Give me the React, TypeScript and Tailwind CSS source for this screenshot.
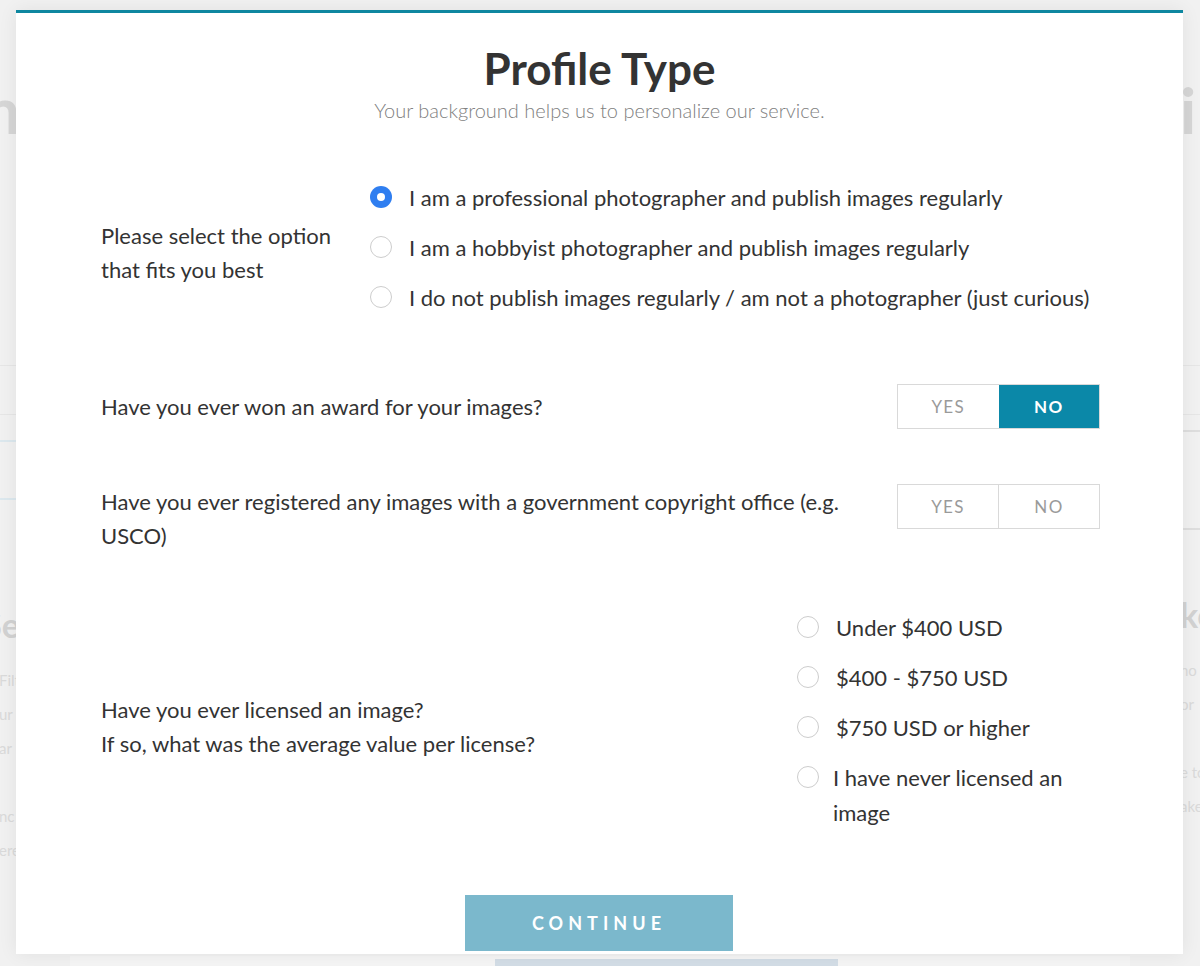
import React from "react";

const font = { fontFamily: "Lato, 'Open Sans', sans-serif" };

function Radio({ checked }: { checked?: boolean }) {
  return checked ? (
    <span className="flex h-[22px] w-[22px] shrink-0 items-center justify-center rounded-full bg-[#2f7ef0]">
      <span className="h-[8px] w-[8px] rounded-full bg-white" />
    </span>
  ) : (
    <span className="h-[22px] w-[22px] shrink-0 rounded-full border-[1.5px] border-[#cdcdcd] bg-white" />
  );
}

function Option({ label, checked }: { label: string; checked?: boolean }) {
  return (
    <div className="flex items-start gap-[17px] py-[7.5px]">
      <div className="flex h-[35px] items-center">
        <Radio checked={checked} />
      </div>
      <span className="text-[22px] leading-[35px] text-[#333]">{label}</span>
    </div>
  );
}

function Toggle({ value }: { value?: "yes" | "no" }) {
  return (
    <div className="flex h-[45px] w-[203px] shrink-0 border border-[#d9d9d9]">
      <div
        className={`flex flex-1 items-center justify-center text-[17px] tracking-[0.08em] ${
          value === "yes" ? "bg-[#0b88a8] font-bold text-white" : "text-[#9a9a9a]"
        }`}
      >
        YES
      </div>
      <div
        className={`flex flex-1 items-center justify-center border-l border-[#d9d9d9] text-[17px] tracking-[0.08em] ${
          value === "no" ? "border-l-0 bg-[#0b88a8] font-bold text-white" : "text-[#9a9a9a]"
        }`}
      >
        NO
      </div>
    </div>
  );
}

function SideColumn({ side }: { side: "left" | "right" }) {
  const left = side === "left";
  return (
    <div
      className={`flex h-full w-[20px] flex-col overflow-hidden ${left ? "items-end" : "items-start"}`}
    >
      <div className="h-[78px]" />
      <div className="text-[64px] font-bold leading-[64px] text-[#d6d6d6]">{left ? "m" : "i"}</div>
      <div className="h-[223px]" />
      <div className="h-px w-full bg-[#e6e6e6]" />
      <div className="h-[48px]" />
      <div className="h-px w-full bg-[#e6e6e6]" />
      <div className={left ? "h-[25px]" : "h-[15px]"} />
      <div
        className={`w-[30px] border-2 ${left ? "h-[60px] border-[#dce8ee]" : "h-[100px] border-[#dedede]"}`}
      />
      <div className={left ? "h-[105px]" : "h-[65px]"} />
      <div className="text-[34px] font-bold leading-[40px] text-[#d2d2d2]">{left ? "Se" : "ke"}</div>
      <div className="h-[18px]" />
      <div className="flex flex-col text-[15px] leading-[34px] text-[#dadada]">
        {(left ? ["Filt", "ur", "ar", "", "nc", "ere"] : ["ho", "or", "", "e to", "ake"]).map((t, i) => (
          <span key={i} className="block h-[34px] whitespace-nowrap">
            {t}
          </span>
        ))}
      </div>
    </div>
  );
}

export default function App() {
  return (
    <div className="relative h-[966px] w-[1200px] overflow-hidden bg-[#f1f1f1]" style={font}>
      {/* page behind overlay */}
      <div className="flex h-full justify-between">
        <SideColumn side="left" />
        <SideColumn side="right" />
      </div>
      <div className="absolute bottom-0 left-[70px] h-[10px] w-[1060px] bg-[#f5f5f5]">
        <div className="ml-[425px] mt-[3px] h-[7px] w-[343px] bg-[#d3dde6]" />
      </div>

      {/* modal */}
      <div className="absolute left-[16px] top-[10px] h-[944px] w-[1167px] border-t-[3px] border-[#0e87a0] bg-white shadow-[0_0_18px_rgba(0,0,0,0.07)]">
        <div className="flex flex-col items-center pt-[31px]">
          <h1 className="text-[44px] font-bold leading-[48px] text-[#333]">Profile Type</h1>
          <p className="mt-[5px] text-[20px] font-light leading-[26px] text-[#808080]">
            Your background helps us to personalize our service.
          </p>
        </div>

        <div className="flex flex-col pl-[85px] pr-[83px] pt-[49px]">
          {/* row 1 */}
          <div className="flex items-center">
            <div className="w-[269px] pt-[12px] text-[22px] leading-[34px] text-[#333]">
              Please select the option
              <br />
              that fits you best
            </div>
            <div className="flex flex-col">
              <Option checked label="I am a professional photographer and publish images regularly" />
              <Option label="I am a hobbyist photographer and publish images regularly" />
              <Option label="I do not publish images regularly / am not a photographer (just curious)" />
            </div>
          </div>

          {/* row 2 */}
          <div className="mt-[62px] flex items-center justify-between">
            <div className="text-[22px] leading-[34px] text-[#333]">Have you ever won an award for your images?</div>
            <Toggle value="no" />
          </div>

          {/* row 3 */}
          <div className="mt-[55px] flex items-start justify-between">
            <div className="mt-px w-[770px] text-[22px] leading-[34px] text-[#333]">
              Have you ever registered any images with a government copyright office (e.g. USCO)
            </div>
            <Toggle />
          </div>

          {/* row 4 */}
          <div className="mt-[49px] flex items-center justify-between">
            <div className="pt-[15px] text-[22px] leading-[34px] text-[#333]">
              Have you ever licensed an image?
              <br />
              If so, what was the average value per license?
            </div>
            <div className="flex w-[303px] flex-col">
              <Option label="Under $400 USD" />
              <Option label="$400 - $750 USD" />
              <Option label="$750 USD or higher" />
              <div className="flex items-start gap-[14px] py-[7.5px]">
                <div className="flex h-[35px] items-center">
                  <Radio />
                </div>
                <span className="w-[250px] text-[22px] leading-[35px] text-[#333]">
                  I have never licensed an image
                </span>
              </div>
            </div>
          </div>

          <div className="mt-[58px] flex justify-center">
            <button className="-ml-[3px] h-[56px] w-[268px] bg-[#7bb8cc] text-[18px] font-bold tracking-[0.28em] text-white">
              CONTINUE
            </button>
          </div>
        </div>
      </div>
    </div>
  );
}
